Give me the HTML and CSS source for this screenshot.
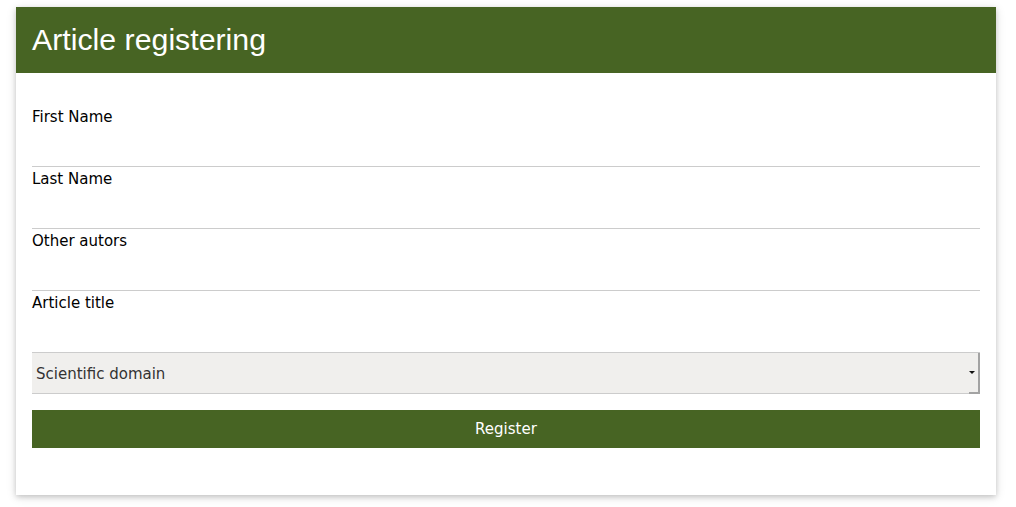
FILE: index.html
```html
<!DOCTYPE html>
<html>
<head>
<meta charset="utf-8">
<link rel="stylesheet" href="styles.css">
</head>
<body>
<div class="card">
  <div class="card-header"><h2 class="title">Article registering</h2></div>
  <form class="form">
    <div class="field">
      <label class="label">First Name</label>
      <input class="input" type="text">
    </div>
    <div class="field">
      <label class="label">Last Name</label>
      <input class="input" type="text">
    </div>
    <div class="field">
      <label class="label">Other autors</label>
      <input class="input" type="text">
    </div>
    <div class="field">
      <label class="label">Article title</label>
      <input class="input input-last" type="text">
    </div>
    <div class="select-wrap">
      <select class="select">
        <option>Scientific domain</option>
      </select>
      <span class="select-arrow"></span>
    </div>
    <button class="button" type="button">Register</button>
  </form>
</div>
</body>
</html>
```

FILE: styles.css
```css
html, body {
  margin: 0;
  padding: 0;
  background: #ffffff;
}
body {
  padding: 7px 20px 12px 16px;
  font-family: "DejaVu Sans", Verdana, sans-serif;
  font-size: 15px;
  color: #000;
}
.card {
  background: #fff;
  box-shadow: 0 2px 5px 0 rgba(0,0,0,0.16), 0 2px 10px 0 rgba(0,0,0,0.12);
}
.card-header {
  background: #476423;
  height: 66px;
  display: flex;
  align-items: center;
  padding: 0 16px;
}
.title {
  margin: 0;
  font-family: "Liberation Sans", Arial, sans-serif;
  font-weight: normal;
  font-size: 30.3px;
  line-height: 36px;
  color: #fff;
}
.form {
  margin: 0;
  padding: 32px 16px 47px;
  display: flex;
  flex-direction: column;
}
.field {
  display: flex;
  flex-direction: column;
}
.label {
  display: block;
  height: 22px;
  line-height: 24px;
  font-size: 15px;
  color: #000;
}
.input {
  display: block;
  box-sizing: border-box;
  width: 100%;
  height: 40px;
  margin: 0;
  padding: 8px;
  border: none;
  border-bottom: 1px solid #cccccc;
  font: 15px "DejaVu Sans", sans-serif;
  outline: none;
  background: #fff;
}
.input-last {
  height: 39px;
  border-bottom: none;
}
.select-wrap {
  position: relative;
  height: 42px;
}
.select {
  display: block;
  box-sizing: border-box;
  width: 100%;
  height: 42px;
  margin: 0;
  padding: 2px 4px 0;
  -webkit-appearance: none;
  appearance: none;
  border: none;
  border-top: 1px solid #cccccc;
  border-bottom: 1px solid #cccccc;
  background: #f0efed;
  font: 15px "DejaVu Sans", sans-serif;
  color: #333;
  border-radius: 0;
  outline: none;
}
.select-arrow {
  position: absolute;
  right: 0;
  top: 1px;
  bottom: 0;
  width: 11px;
  border-right: 2px solid #a3a3a3;
  border-bottom: 2px solid #a3a3a3;
  box-sizing: border-box;
  pointer-events: none;
}
.select-arrow::after {
  content: "";
  position: absolute;
  right: 3px;
  top: 18px;
  border-left: 3px solid transparent;
  border-right: 3px solid transparent;
  border-top: 3px solid #111;
}
.button {
  display: block;
  width: 100%;
  height: 38px;
  margin-top: 16px;
  border: none;
  background: #476423;
  color: #fff;
  font: 15px "DejaVu Sans", sans-serif;
  cursor: pointer;
  padding: 0;
}
```
